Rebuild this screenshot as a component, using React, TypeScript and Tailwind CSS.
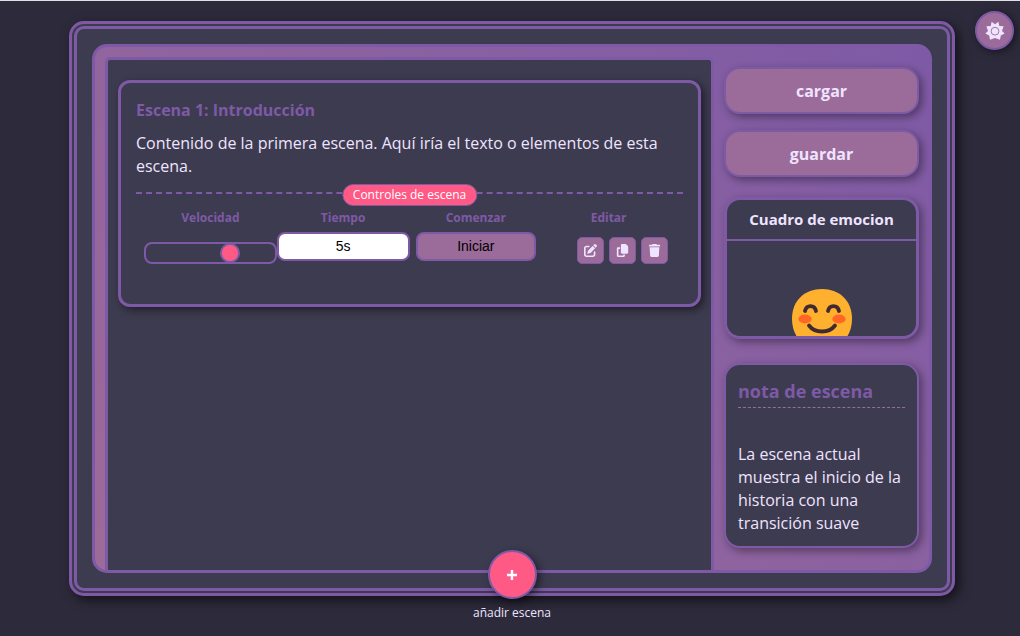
import { useState } from "react";
import type { ReactNode } from "react";
import { FaCopy, FaPenToSquare, FaTrash } from "react-icons/fa6";

function GearIcon() {
  return (
    <svg viewBox="0 0 20 20" className="size-5" aria-hidden="true">
      <path
        fill="#efe4ff"
        d="M6.6 0.8 L10 3.2 L13.4 0.8 L14.3 4.9 L18.6 5.2 L17 10 L19.6 12.6 L15.8 14.6 L15 18.8 L10 17 L5 18.8 L4.2 14.6 L0.4 12.6 L3 10 L1.4 5.2 L5.7 4.9 Z"
      />
      <circle cx="10" cy="10.2" r="3.9" fill="none" stroke="#9b6b99" strokeWidth="0.9" />
    </svg>
  );
}

function SmileIcon() {
  return (
    <svg viewBox="0 0 60 60" className="size-15 shrink-0" role="img" aria-label="Feliz">
      <path
        fill="#ffb02e"
        d="M30 0 C47 0 60 11 60 30 C60 49 47 60 30 60 C13 60 0 49 0 30 C0 11 13 0 30 0 Z"
      />
      <ellipse cx="13" cy="30" rx="6.7" ry="4.4" fill="#ff6723" />
      <ellipse cx="47" cy="30" rx="6.7" ry="4.4" fill="#ff6723" />
      <g fill="none" stroke="#402a32" strokeWidth="3.8" strokeLinecap="round">
        <path d="M13 22 C14.5 15.5 22.5 15.5 24 22" />
        <path d="M36 22 C37.5 15.5 45.5 15.5 47 22" />
        <path d="M17 36.5 C23 44.5 37 44.5 43 36.5" />
      </g>
    </svg>
  );
}

function SideButton({ children }: { children: ReactNode }) {
  return (
    <button
      type="button"
      className="h-[47px] w-full shrink-0 rounded-2xl border-2 border-[#7e5aa6] bg-[#9b6b99] text-base font-bold shadow-[3px_3px_8px_rgba(0,0,0,0.4)]"
    >
      {children}
    </button>
  );
}

function IconButton({ label, children }: { label: string; children: ReactNode }) {
  return (
    <button
      type="button"
      aria-label={label}
      className="flex size-[27px] items-center justify-center rounded-[5px] border border-[#7e5aa6] bg-[#9b6b99] text-[13px]"
    >
      {children}
    </button>
  );
}

const labelStyle = "text-[12px] leading-5 font-bold text-[#7e5aa6]";

function SceneCard() {
  const [speed, setSpeed] = useState(68);
  return (
    <article className="h-[227px] rounded-xl border-[3px] border-[#7e5aa6] bg-[#3d3b4f] px-[15px] pt-4 shadow-[3px_3px_8px_rgba(0,0,0,0.5)]">
      <h2 className="text-base leading-[23px] font-bold text-[#7e5aa6]">Escena 1: Introducción</h2>
      <p className="mt-2.5 text-base leading-[23px]">
        Contenido de la primera escena. Aquí iría el texto o elementos de esta escena.
      </p>
      <div className="relative mt-3.5 border-t-2 border-dashed border-[#7e5aa6] px-2 pt-3.5">
        <span className="absolute -top-2.5 left-1/2 flex h-[22px] -translate-x-1/2 items-center rounded-xl border border-[#7e5aa6] bg-[#ff5a86] px-2.5 text-[12px] whitespace-nowrap text-white">
          Controles de escena
        </span>
        <div className="grid grid-cols-4">
          <div className="flex flex-col items-center">
            <label htmlFor="speed" className={labelStyle}>
              Velocidad
            </label>
            <input
              id="speed"
              type="range"
              min={0}
              max={100}
              value={speed}
              onChange={(e) => setSpeed(Number(e.target.value))}
              className="mt-3.5 h-[22px] w-full appearance-none rounded-lg border-2 border-[#7e5aa6] bg-transparent [&::-webkit-slider-thumb]:size-5 [&::-webkit-slider-thumb]:appearance-none [&::-webkit-slider-thumb]:rounded-full [&::-webkit-slider-thumb]:border-2 [&::-webkit-slider-thumb]:border-[#7e5aa6] [&::-webkit-slider-thumb]:bg-[#ff5a86]"
            />
          </div>
          <div className="flex flex-col items-center">
            <label htmlFor="time" className={labelStyle}>
              Tiempo
            </label>
            <select
              id="time"
              defaultValue="5"
              className="mt-1 h-[29px] w-full appearance-none rounded-lg border-2 border-[#7e5aa6] bg-white text-center font-['Liberation_Sans',sans-serif] text-[14px] text-black [text-align-last:center]"
            >
              <option value="5">5s</option>
            </select>
          </div>
          <div className="flex flex-col items-center">
            <span className={labelStyle}>Comenzar</span>
            <button
              type="button"
              className="mt-1 h-[29px] w-[120px] rounded-lg border-2 border-[#7e5aa6] bg-[#9b6b99] font-['Liberation_Sans',sans-serif] text-[14px] text-black"
            >
              Iniciar
            </button>
          </div>
          <div className="flex flex-col items-center">
            <span className={labelStyle}>Editar</span>
            <div className="mt-[9px] flex gap-[5px] pl-7">
              <IconButton label="Editar escena">
                <FaPenToSquare />
              </IconButton>
              <IconButton label="Duplicar escena">
                <FaCopy />
              </IconButton>
              <IconButton label="Eliminar escena">
                <FaTrash />
              </IconButton>
            </div>
          </div>
        </div>
      </div>
    </article>
  );
}

export default function App() {
  return (
    <div className="relative flex h-screen min-h-[600px] flex-col border-t border-[#dfe0e4] bg-[#2d2a3b] pt-5 pr-[65px] pb-10 pl-[69px] font-['Open_Sans',sans-serif] text-[#efe4ff]">
      <button
        type="button"
        aria-label="Configuración"
        className="absolute top-2.5 right-1.5 flex size-[39px] items-center justify-center rounded-full border-2 border-[#7e5aa6] bg-[#9b6b99] shadow-[2px_2px_8px_rgba(0,0,0,0.5)]"
      >
        <GearIcon />
      </button>

      <main className="relative flex min-h-0 flex-1 rounded-[15px] border-8 border-double border-[#7e5aa6] bg-[#3d3b4f] p-[15px] shadow-[4px_4px_12px_rgba(0,0,0,0.6)]">
        <div className="flex min-w-0 flex-1 overflow-hidden rounded-[15px] border-[3px] border-[#7e5aa6] bg-[linear-gradient(45deg,#9d6b98,#7e5aa6)]">
          <section className="mt-2.5 ml-2.5 min-w-0 flex-1 rounded-t-[5px] border-x-[3px] border-t-[3px] border-[#7e5aa6] bg-[#3d3b4f] px-2.5 pt-5">
            <SceneCard />
          </section>

          <aside className="flex w-[215px] shrink-0 flex-col px-2.5 pt-5 pb-[22px]">
            <div className="flex shrink-0 flex-col gap-4">
              <SideButton>cargar</SideButton>
              <SideButton>guardar</SideButton>
            </div>
            <section className="mt-5 flex h-[142px] shrink-0 flex-col overflow-hidden rounded-2xl border-[3px] border-[#7e5aa6] bg-[#3d3b4f] shadow-[3px_3px_8px_rgba(0,0,0,0.4)]">
              <h2 className="flex h-[41px] shrink-0 items-center justify-center border-b-2 border-[#7e5aa6] text-[15px] font-bold">
                Cuadro de emocion
              </h2>
              <div className="flex min-h-0 flex-1 justify-center pt-12">
                <SmileIcon />
              </div>
            </section>
            <section className="mt-6 min-h-0 flex-1 overflow-hidden rounded-2xl border-2 border-[#7e5aa6] bg-[#3d3b4f] px-3 pt-3.5 shadow-[3px_3px_8px_rgba(0,0,0,0.4)]">
              <h2 className="border-b border-dashed border-[#9b6b99] pb-1 text-lg leading-6 font-bold text-[#7e5aa6]">
                nota de escena
              </h2>
              <p className="mt-[35px] text-base leading-[23px]">
                La escena actual muestra el inicio de la historia con una transición suave
              </p>
            </section>
          </aside>
        </div>

        <div className="absolute -bottom-[33px] left-1/2 flex -translate-x-1/2 flex-col items-center">
          <button
            type="button"
            aria-labelledby="add-scene"
            className="flex size-[49px] items-center justify-center rounded-full border-2 border-[#7e5aa6] bg-[#ff5a86] text-white shadow-[3px_3px_8px_rgba(0,0,0,0.5)]"
          >
            <svg viewBox="0 0 12 12" className="size-3" aria-hidden="true">
              <path d="M6 1v10M1 6h10" stroke="currentColor" strokeWidth="2.4" />
            </svg>
          </button>
          <span id="add-scene" className="mt-1.5 text-[12px] leading-4 font-medium whitespace-nowrap">
            añadir escena
          </span>
        </div>
      </main>
    </div>
  );
}
